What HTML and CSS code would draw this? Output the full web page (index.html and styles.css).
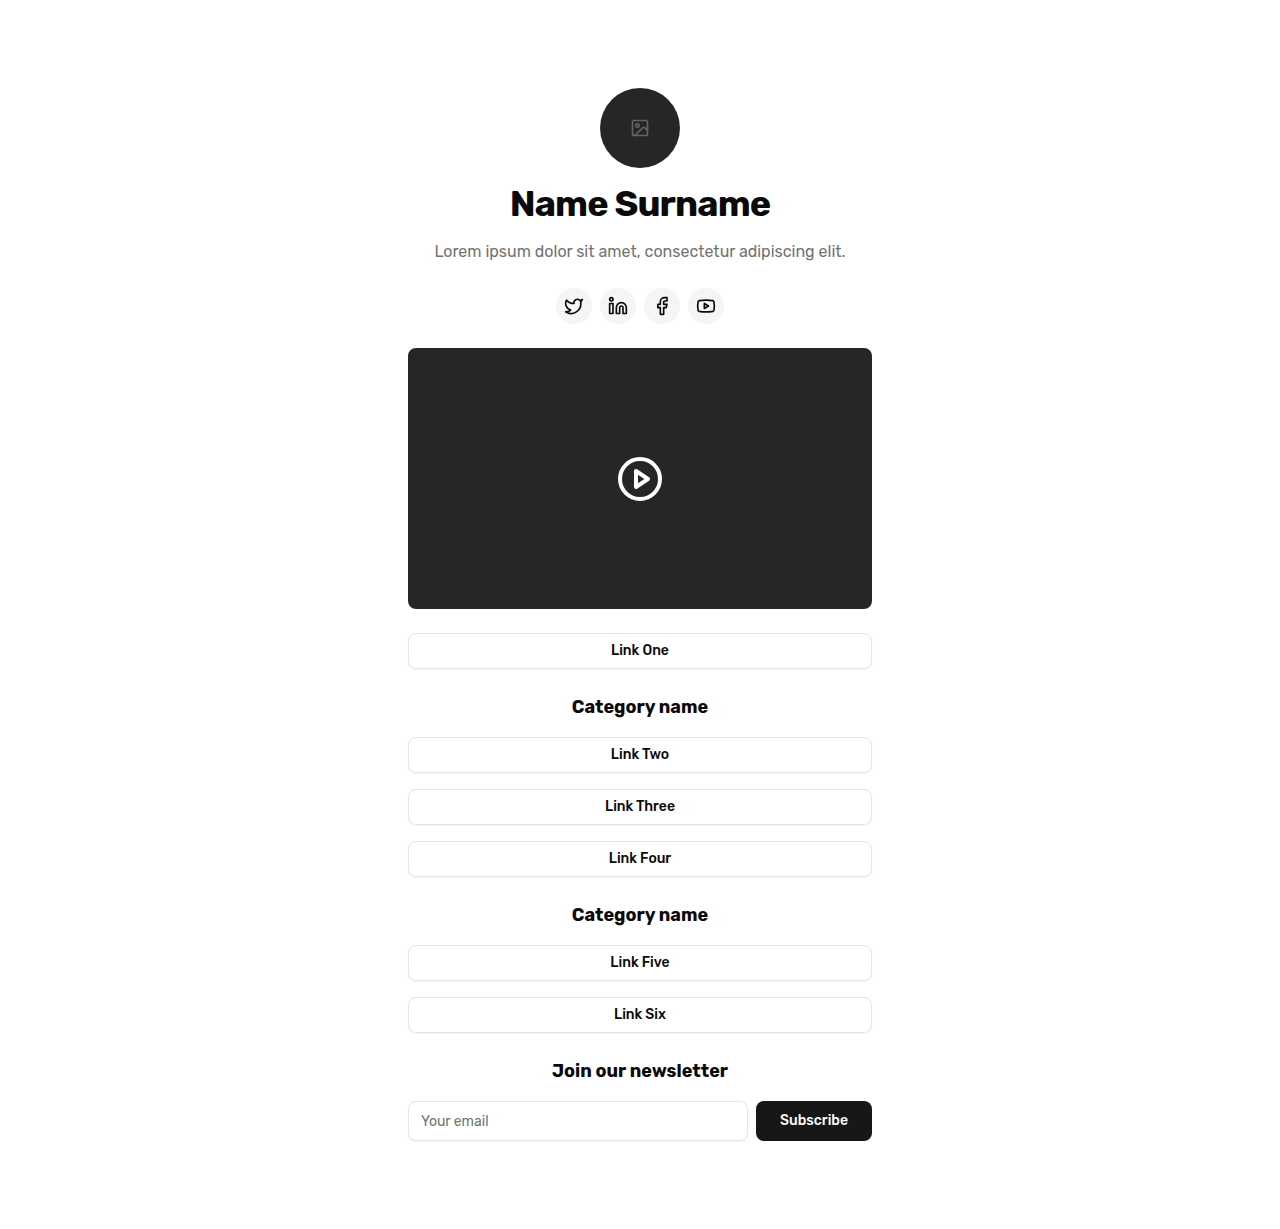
FILE: index.html
```html
<!DOCTYPE html>
<html lang="en">
<head>
<meta charset="utf-8">
<meta name="viewport" content="width=device-width, initial-scale=1">
<title>Name Surname</title>
<link rel="stylesheet" href="styles.css">
</head>
<body>
<main class="page">
  <header class="profile">
    <div class="avatar">
      <svg class="icon" viewBox="0 0 24 24"><rect width="18" height="18" x="3" y="3" rx="2"/><circle cx="9" cy="9" r="2"/><path d="m21 15-3.086-3.086a2 2 0 0 0-2.828 0L6 21"/></svg>
    </div>
    <h1 class="name">Name Surname</h1>
    <p class="bio">Lorem ipsum dolor sit amet, consectetur adipiscing elit.</p>
  </header>
  <nav class="socials">
    <a class="social" href="#" aria-label="Twitter"><svg class="icon" viewBox="0 0 24 24"><path d="M22 4s-.7 2.1-2 3.4c1.6 10-9.4 17.3-18 11.6 2.2.1 4.4-.6 6-2C3 15.5.5 9.6 3 5c2.2 2.6 5.6 4.1 9 4-.9-4.2 4-6.6 7-3.8 1.1 0 3-1.2 3-1.2z"/></svg></a>
    <a class="social" href="#" aria-label="LinkedIn"><svg class="icon" viewBox="0 0 24 24"><path d="M16 8a6 6 0 0 1 6 6v7h-4v-7a2 2 0 0 0-2-2 2 2 0 0 0-2 2v7h-4v-7a6 6 0 0 1 6-6z"/><rect width="4" height="12" x="2" y="9"/><circle cx="4" cy="4" r="2"/></svg></a>
    <a class="social" href="#" aria-label="Facebook"><svg class="icon" viewBox="0 0 24 24"><path d="M18 2h-3a5 5 0 0 0-5 5v3H7v4h3v8h4v-8h3l1-4h-4V7a1 1 0 0 1 1-1h3z"/></svg></a>
    <a class="social" href="#" aria-label="YouTube"><svg class="icon" viewBox="0 0 24 24"><path d="M2.5 17a24.12 24.12 0 0 1 0-10 2 2 0 0 1 1.4-1.4 49.56 49.56 0 0 1 16.2 0A2 2 0 0 1 21.5 7a24.12 24.12 0 0 1 0 10 2 2 0 0 1-1.4 1.4 49.55 49.55 0 0 1-16.2 0A2 2 0 0 1 2.5 17"/><path d="m10 15 5-3-5-3z"/></svg></a>
  </nav>
  <div class="video">
    <svg class="icon play" viewBox="0 0 24 24"><circle cx="12" cy="12" r="10"/><path d="m10 8 6 4-6 4z"/></svg>
  </div>
  <section class="group">
    <a class="link" href="#">Link One</a>
  </section>
  <section class="group">
    <h2 class="heading">Category name</h2>
    <a class="link" href="#">Link Two</a>
    <a class="link" href="#">Link Three</a>
    <a class="link" href="#">Link Four</a>
  </section>
  <section class="group">
    <h2 class="heading">Category name</h2>
    <a class="link" href="#">Link Five</a>
    <a class="link" href="#">Link Six</a>
  </section>
  <section class="group">
    <h2 class="heading">Join our newsletter</h2>
    <form class="form">
      <input class="input" type="email" placeholder="Your email">
      <button class="button" type="button">Subscribe</button>
    </form>
  </section>
</main>
</body>
</html>
```
FILE: styles.css
```css
* {
  box-sizing: border-box;
  margin: 0;
}

body {
  background: #fff;
  color: #0a0a0a;
  font-family: Rubik, Roboto, sans-serif;
}

.page {
  width: 464px;
  margin: 0 auto;
  padding: 88px 0;
  display: flex;
  flex-direction: column;
  gap: 24px;
}

.icon {
  width: 20px;
  height: 20px;
  display: block;
  fill: none;
  stroke: currentColor;
  stroke-width: 2;
  stroke-linecap: round;
  stroke-linejoin: round;
}

.profile {
  display: flex;
  flex-direction: column;
  align-items: center;
  gap: 16px;
  text-align: center;
}

.avatar {
  width: 80px;
  height: 80px;
  border-radius: 50%;
  background: #262626;
  color: #636363;
  display: grid;
  place-items: center;
}

.name {
  font-size: 36px;
  line-height: 40px;
  font-weight: 700;
  letter-spacing: -0.025em;
  white-space: nowrap;
}

.bio {
  font-size: 16px;
  line-height: 24px;
  color: #737373;
  white-space: nowrap;
}

.socials {
  display: flex;
  justify-content: center;
  gap: 8px;
}

.social {
  width: 36px;
  height: 36px;
  border-radius: 50%;
  background: #f5f5f5;
  color: #0a0a0a;
  display: grid;
  place-items: center;
}

.video {
  aspect-ratio: 16 / 9;
  border-radius: 8px;
  background: #262626;
  color: #fff;
  display: grid;
  place-items: center;
}

.play {
  width: 48px;
  height: 48px;
}

.group {
  display: flex;
  flex-direction: column;
  gap: 16px;
}

.heading {
  font-size: 18px;
  line-height: 28px;
  font-weight: 700;
  text-align: center;
}

.link {
  height: 36px;
  border: 1px solid #e5e5e5;
  border-radius: 8px;
  box-shadow: 0 1px 2px rgba(0, 0, 0, 0.05);
  color: #0a0a0a;
  font-size: 14px;
  line-height: 34px;
  font-weight: 500;
  text-align: center;
  text-decoration: none;
}

.form {
  display: flex;
  gap: 8px;
}

.input {
  flex: 1;
  min-width: 0;
  height: 40px;
  padding: 0 12px;
  border: 1px solid #e5e5e5;
  border-radius: 8px;
  box-shadow: 0 1px 2px rgba(0, 0, 0, 0.05);
  background: #fff;
  font: 400 14px/20px Rubik, Roboto, sans-serif;
}

.input::placeholder {
  color: #737373;
}

.button {
  height: 40px;
  padding: 0 24px 1px;
  border: 0;
  border-radius: 8px;
  background: #171717;
  color: #fafafa;
  font: 500 14px/20px Rubik, Roboto, sans-serif;
}
```
